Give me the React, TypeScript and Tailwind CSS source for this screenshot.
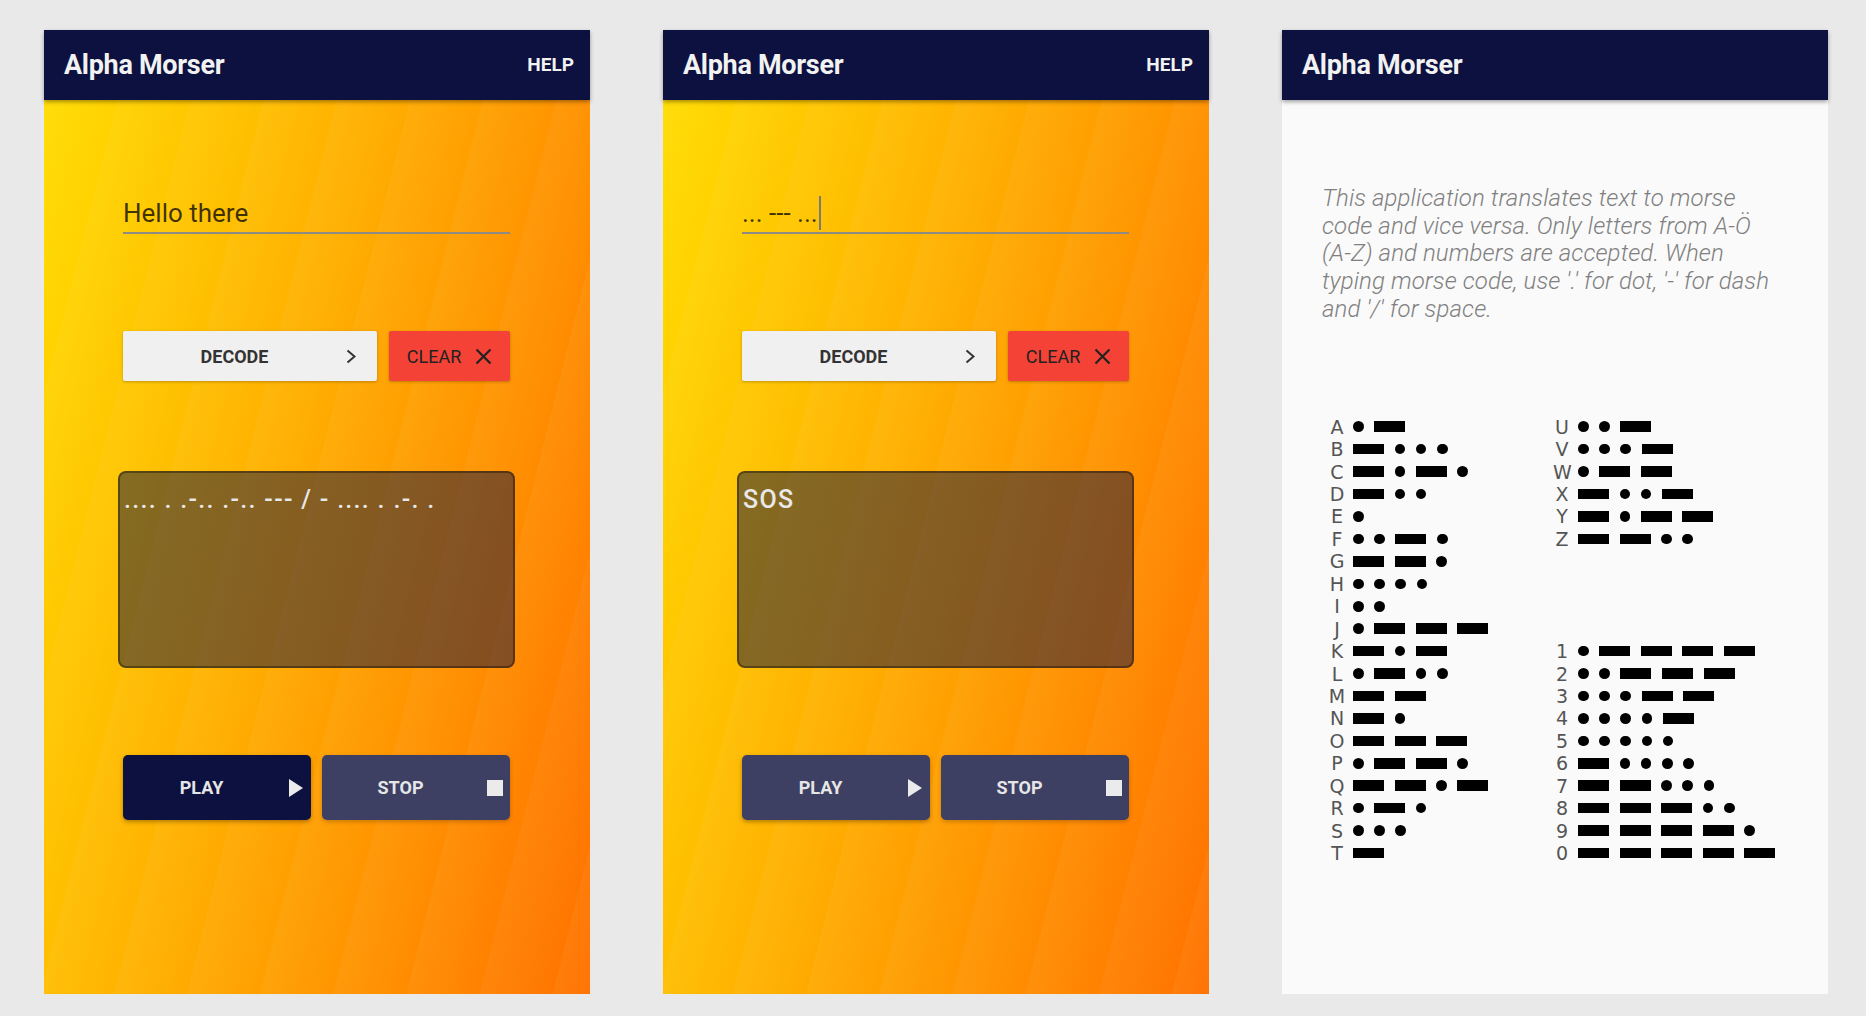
import type React from 'react';

const LETTERS: [string, string][] = [
  ['A', '.-'], ['B', '-...'], ['C', '-.-.'], ['D', '-..'], ['E', '.'],
  ['F', '..-.'], ['G', '--.'], ['H', '....'], ['I', '..'], ['J', '.---'],
  ['K', '-.-'], ['L', '.-..'], ['M', '--'], ['N', '-.'], ['O', '---'],
  ['P', '.--.'], ['Q', '--.-'], ['R', '.-.'], ['S', '...'], ['T', '-'],
];

const RIGHT: ([string, string] | null)[] = [
  ['U', '..-'], ['V', '...-'], ['W', '.--'], ['X', '-..-'], ['Y', '-.--'], ['Z', '--..'],
  null, null, null, null,
  ['1', '.----'], ['2', '..---'], ['3', '...--'], ['4', '....-'], ['5', '.....'],
  ['6', '-....'], ['7', '--...'], ['8', '---..'], ['9', '----.'], ['0', '-----'],
];

const Header = ({ help }: { help?: boolean }) => (
  <div className="relative z-10 flex h-[70px] items-center justify-between bg-[#0c1140] pl-[20px] pr-[16px] shadow-[0_2px_4px_rgba(0,0,0,0.35)]">
    <span className="text-[27px] font-bold tracking-[-0.3px] text-[#f2f2f2]">Alpha Morser</span>
    {help && <span className="text-[19px] font-bold text-[#f2f2f2]">HELP</span>}
  </div>
);

const Chevron = () => (
  <svg width="10" height="15" viewBox="0 0 10 15" className="mr-[21px] shrink-0">
    <polyline points="1.5,1.5 8.5,7.5 1.5,13.5" fill="none" stroke="#333" strokeWidth="2" />
  </svg>
);

const Cross = () => (
  <svg width="17" height="17" viewBox="0 0 17 17" className="shrink-0">
    <path d="M1.5 1.5 L15.5 15.5 M15.5 1.5 L1.5 15.5" stroke="#222" strokeWidth="2.2" fill="none" />
  </svg>
);

const PlayIcon = () => (
  <svg width="16" height="20" viewBox="0 0 16 20" className="ml-[8px] mr-[7px] shrink-0">
    <polygon points="1,1 15,10 1,19" fill="#ebebeb" />
  </svg>
);

const StopIcon = () => <span className="ml-[8px] mr-[7px] h-[16px] w-[16px] shrink-0 bg-[#ebebeb]" />;

interface MorserProps {
  input: string;
  cursor?: boolean;
  output: string;
  playActive?: boolean;
}

const MorserScreen = ({ input, cursor, output, playActive }: MorserProps) => (
  <div className="flex h-[964px] w-[546px] flex-col">
    <Header help />
    <div className="flex-1 [background-image:repeating-linear-gradient(104deg,rgba(255,255,255,0.045)_0px,rgba(255,255,255,0)_71px),linear-gradient(104deg,#ffdc00_0%,#ff7200_100%)]">
      <div className="ml-[79px] mt-[98px] w-[387px] border-b-2 border-[#8d8b84] pb-[4px]">
        <div className="flex h-[30px] items-center text-[26px] leading-[30px] text-black/75">
          <span>{input}</span>
          {cursor && <span className="ml-[1px] h-[34px] w-[2px] bg-[#7a7a7a]" />}
        </div>
      </div>

      <div className="ml-[79px] mt-[97px] flex w-[387px] gap-[12px]">
        <button type="button" className="flex h-[50px] w-[254px] items-center rounded-[2px] bg-[#f0f0f0] shadow-[0_1px_3px_rgba(0,0,0,0.25)]">
          <span className="flex-1 text-center text-[18px] font-bold text-[#333]">DECODE</span>
          <Chevron />
        </button>
        <button type="button" className="flex h-[50px] w-[121px] items-center justify-center gap-[14px] rounded-[2px] bg-[#f44336] shadow-[0_1px_3px_rgba(0,0,0,0.25)]">
          <span className="text-[18px] text-[#222]">CLEAR</span>
          <Cross />
        </button>
      </div>

      <div className="ml-[74px] mt-[90px] h-[197px] w-[397px] rounded-[8px] border-2 border-black/35 bg-[#0c1140]/50 pl-[4px] pt-[12px]">
        <div className="text-[25px] font-medium leading-[30px] tracking-[1.3px] text-[#e8e8e8]">{output}</div>
      </div>

      <div className="ml-[79px] mt-[87px] flex w-[387px] gap-[11px]">
        <button
          type="button"
          className={`flex h-[65px] w-[188px] items-center rounded-[5px] shadow-[0_2px_4px_rgba(0,0,0,0.3)] ${playActive ? 'bg-[#0d1140]' : 'bg-[#3d3f63]'}`}
        >
          <span className="flex-1 text-center text-[18px] font-bold text-[#e6e6e6]">PLAY</span>
          <PlayIcon />
        </button>
        <button type="button" className="flex h-[65px] w-[188px] items-center rounded-[5px] bg-[#3d3f63] shadow-[0_2px_4px_rgba(0,0,0,0.2)]">
          <span className="flex-1 text-center text-[18px] font-bold text-[#e6e6e6]">STOP</span>
          <StopIcon />
        </button>
      </div>
    </div>
  </div>
);

const Code = ({ code }: { code: string }) => (
  <div className="flex items-center gap-[10.6px]">
    {code.split('').map((c, i) =>
      c === '.' ? (
        <span key={i} className="h-[10.6px] w-[10.6px] rounded-full bg-black" />
      ) : (
        <span key={i} className="h-[10.6px] w-[31px] bg-black" />
      )
    )}
  </div>
);

const ChartRow = ({ entry }: { entry: [string, string] | null }) => (
  <div className="flex h-[22.45px] items-center gap-[7px]">
    {entry && (
      <>
        <span className="w-[18px] text-center text-[19px] leading-[22px] text-[#555] [font-family:'DejaVu_Sans',sans-serif]">
          {entry[0]}
        </span>
        <Code code={entry[1]} />
      </>
    )}
  </div>
);

const HelpScreen = () => (
  <div className="flex h-[964px] w-[546px] flex-col">
    <Header />
    <div className="flex-1 bg-[#fafafa]">
      <p className="pl-[40px] pt-[85px] text-[24px] font-light italic leading-[27.7px] tracking-[0.1px] text-[#808080] whitespace-nowrap">
        This application translates text to morse
        <br />
        code and vice versa. Only letters from A-Ö
        <br />
        (A-Z) and numbers are accepted. When
        <br />
        typing morse code, use '.' for dot, '-' for dash
        <br />
        and '/' for space.
      </p>
      <div className="mt-[92px] flex pl-[46px]">
        <div className="w-[225px]">
          {LETTERS.map((e) => (
            <ChartRow key={e[0]} entry={e} />
          ))}
        </div>
        <div>
          {RIGHT.map((e, i) => (
            <ChartRow key={i} entry={e} />
          ))}
        </div>
      </div>
    </div>
  </div>
);

const App: React.FC = () => (
  <div className="flex min-h-[1016px] w-full gap-[73px] bg-[#e9e9e9] pl-[44px] pt-[30px] [font-family:Roboto,'Liberation_Sans',sans-serif]">
    <MorserScreen input="Hello there" output=".... . .-.. .-.. --- / - .... . .-. ." playActive />
    <MorserScreen input="... --- ..." cursor output="SOS" />
    <HelpScreen />
  </div>
);

export default App;
